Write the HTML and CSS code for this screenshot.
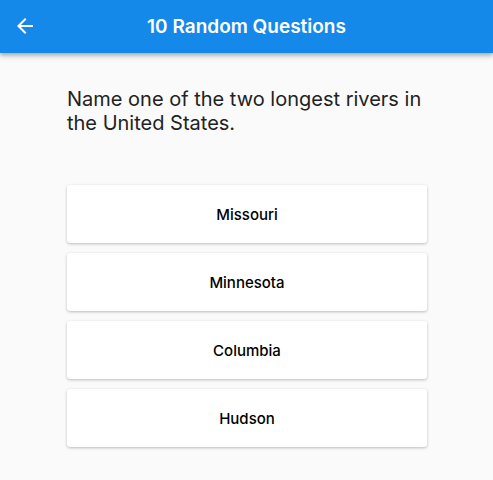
FILE: index.html
```html
<!DOCTYPE html>
<html>
<head>
<meta charset="utf-8">
<link rel="stylesheet" href="styles.css">
</head>
<body>
<header class="appbar">
  <button class="back" aria-label="Back">
    <svg width="24" height="24" viewBox="0 0 24 24"><path fill="#fff" d="M20 11H7.83l5.59-5.59L12 4l-8 8 8 8 1.41-1.41L7.83 13H20v-2z"/></svg>
  </button>
  <h1 class="title">10 Random Questions</h1>
</header>
<main class="content">
  <p class="question">Name one of the two longest rivers in the United States.</p>
  <div class="answers">
    <button class="answer">Missouri</button>
    <button class="answer">Minnesota</button>
    <button class="answer">Columbia</button>
    <button class="answer">Hudson</button>
  </div>
</main>
</body>
</html>
```
FILE: styles.css
```css
* { box-sizing: border-box; }
html, body { margin: 0; padding: 0; }
body {
  width: 493px;
  height: 480px;
  background: #fafafa;
  font-family: Inter, "Noto Sans", sans-serif;
  overflow: hidden;
}
.appbar {
  position: relative;
  height: 53px;
  background: #1589ea;
  display: flex;
  align-items: center;
  justify-content: center;
  box-shadow: 0 2px 4px rgba(0,0,0,0.25), 0 4px 5px rgba(0,0,0,0.1);
}
.back {
  position: absolute;
  left: 13px;
  top: 14px;
  width: 24px;
  height: 24px;
  padding: 0;
  border: 0;
  background: none;
  display: flex;
}
.title {
  margin: 0;
  color: #fff;
  font-size: 19px;
  font-weight: 600;
  letter-spacing: 0;
}
.content {
  padding: 34px 66px 0 67px;
}
.question {
  margin: 0;
  font-size: 20px;
  line-height: 24px;
  color: #222;
  font-weight: 400;
}
.answers {
  margin-top: 50px;
  display: flex;
  flex-direction: column;
  gap: 10px;
  width: 360px;
}
.answer {
  height: 58px;
  border: 0;
  background: #fff;
  border-radius: 3px;
  font-family: inherit;
  font-size: 15px;
  font-weight: 500;
  color: #000;
  box-shadow: 0 1px 3px rgba(0,0,0,0.25);
}
```
